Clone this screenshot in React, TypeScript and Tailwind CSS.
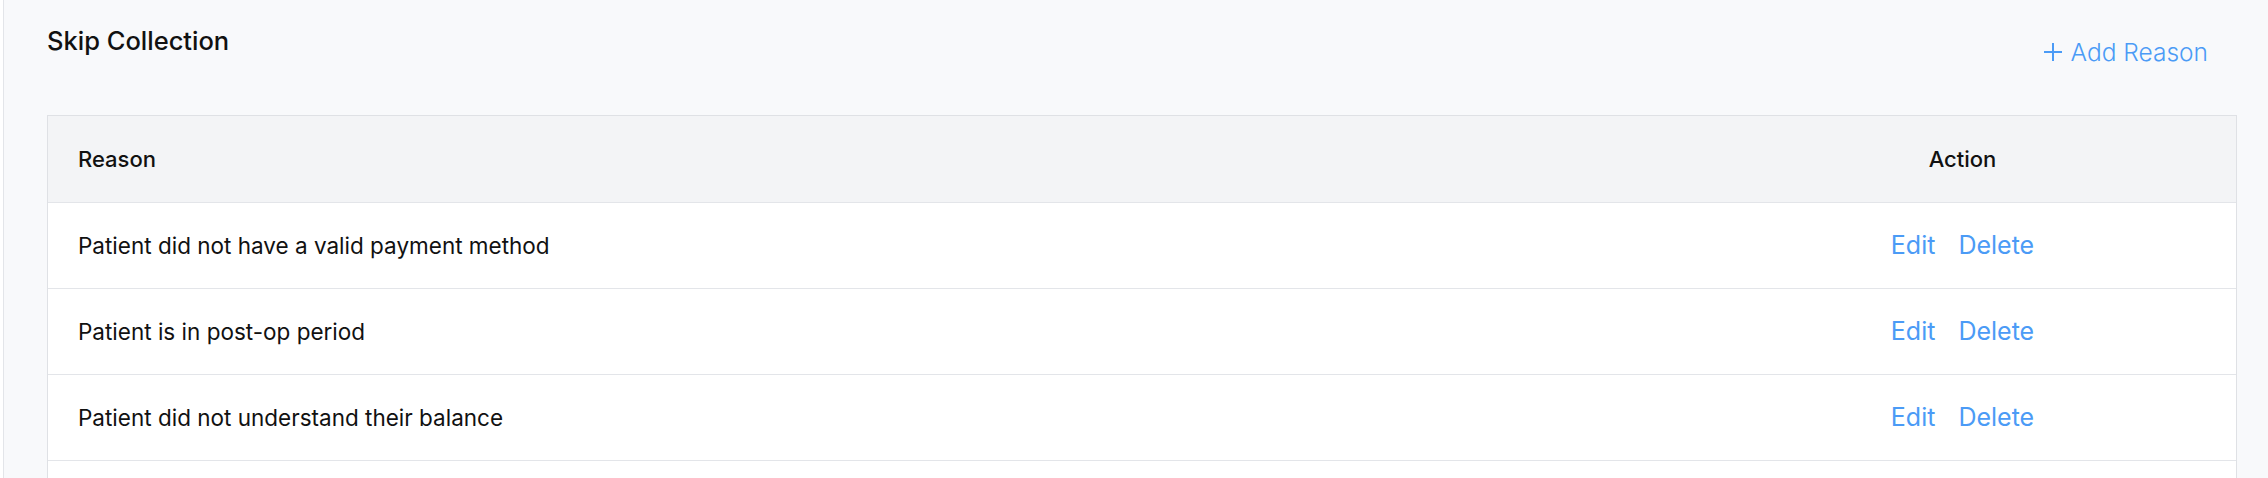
const reasons = [
  'Patient did not have a valid payment method',
  'Patient is in post-op period',
  'Patient did not understand their balance',
];

function AddIcon() {
  return (
    <svg width="20" height="20" viewBox="0 0 20 20" className="shrink-0">
      <path d="M10 1v18M1 10h18" stroke="currentColor" strokeWidth="2" fill="none" />
    </svg>
  );
}

export default function App() {
  return (
    <div className="h-[478px] overflow-hidden bg-white pl-[3px] font-['Inter',sans-serif] text-[#111]">
      <div className="min-h-[478px] border-l border-[#e3e5e9] bg-[#f8f9fb] pl-[43px] pr-[31px] pt-[25px]">
        <div className="flex items-start justify-between">
          <h2 className="text-[25.5px] leading-[32px] font-medium">Skip Collection</h2>
          <button className="mt-[11px] mr-[29px] flex items-center gap-[8px] text-[24.5px] leading-[32px] font-light text-[#4b9bf6]">
            <AddIcon />
            Add Reason
          </button>
        </div>
        <div className="mt-[47px] border border-[#dfe1e5] bg-white">
          <div className="flex h-[86px] items-center bg-[#f3f4f6] text-[22px] font-medium">
            <div className="w-3/4 pl-[30px]">Reason</div>
            <div className="w-1/4 text-center">Action</div>
          </div>
          {reasons.map((r, i) => (
            <div key={i} className="flex h-[86px] items-center border-t border-[#e3e5e9] text-[22.5px]">
              <div className="w-3/4 pl-[30px]">{r}</div>
              <div className="flex w-1/4 justify-center gap-[23px] text-[25px] text-[#4b9bf6]">
                <button>Edit</button>
                <button>Delete</button>
              </div>
            </div>
          ))}
          <div className="h-[86px] border-t border-[#e3e5e9]" />
        </div>
      </div>
    </div>
  );
}
